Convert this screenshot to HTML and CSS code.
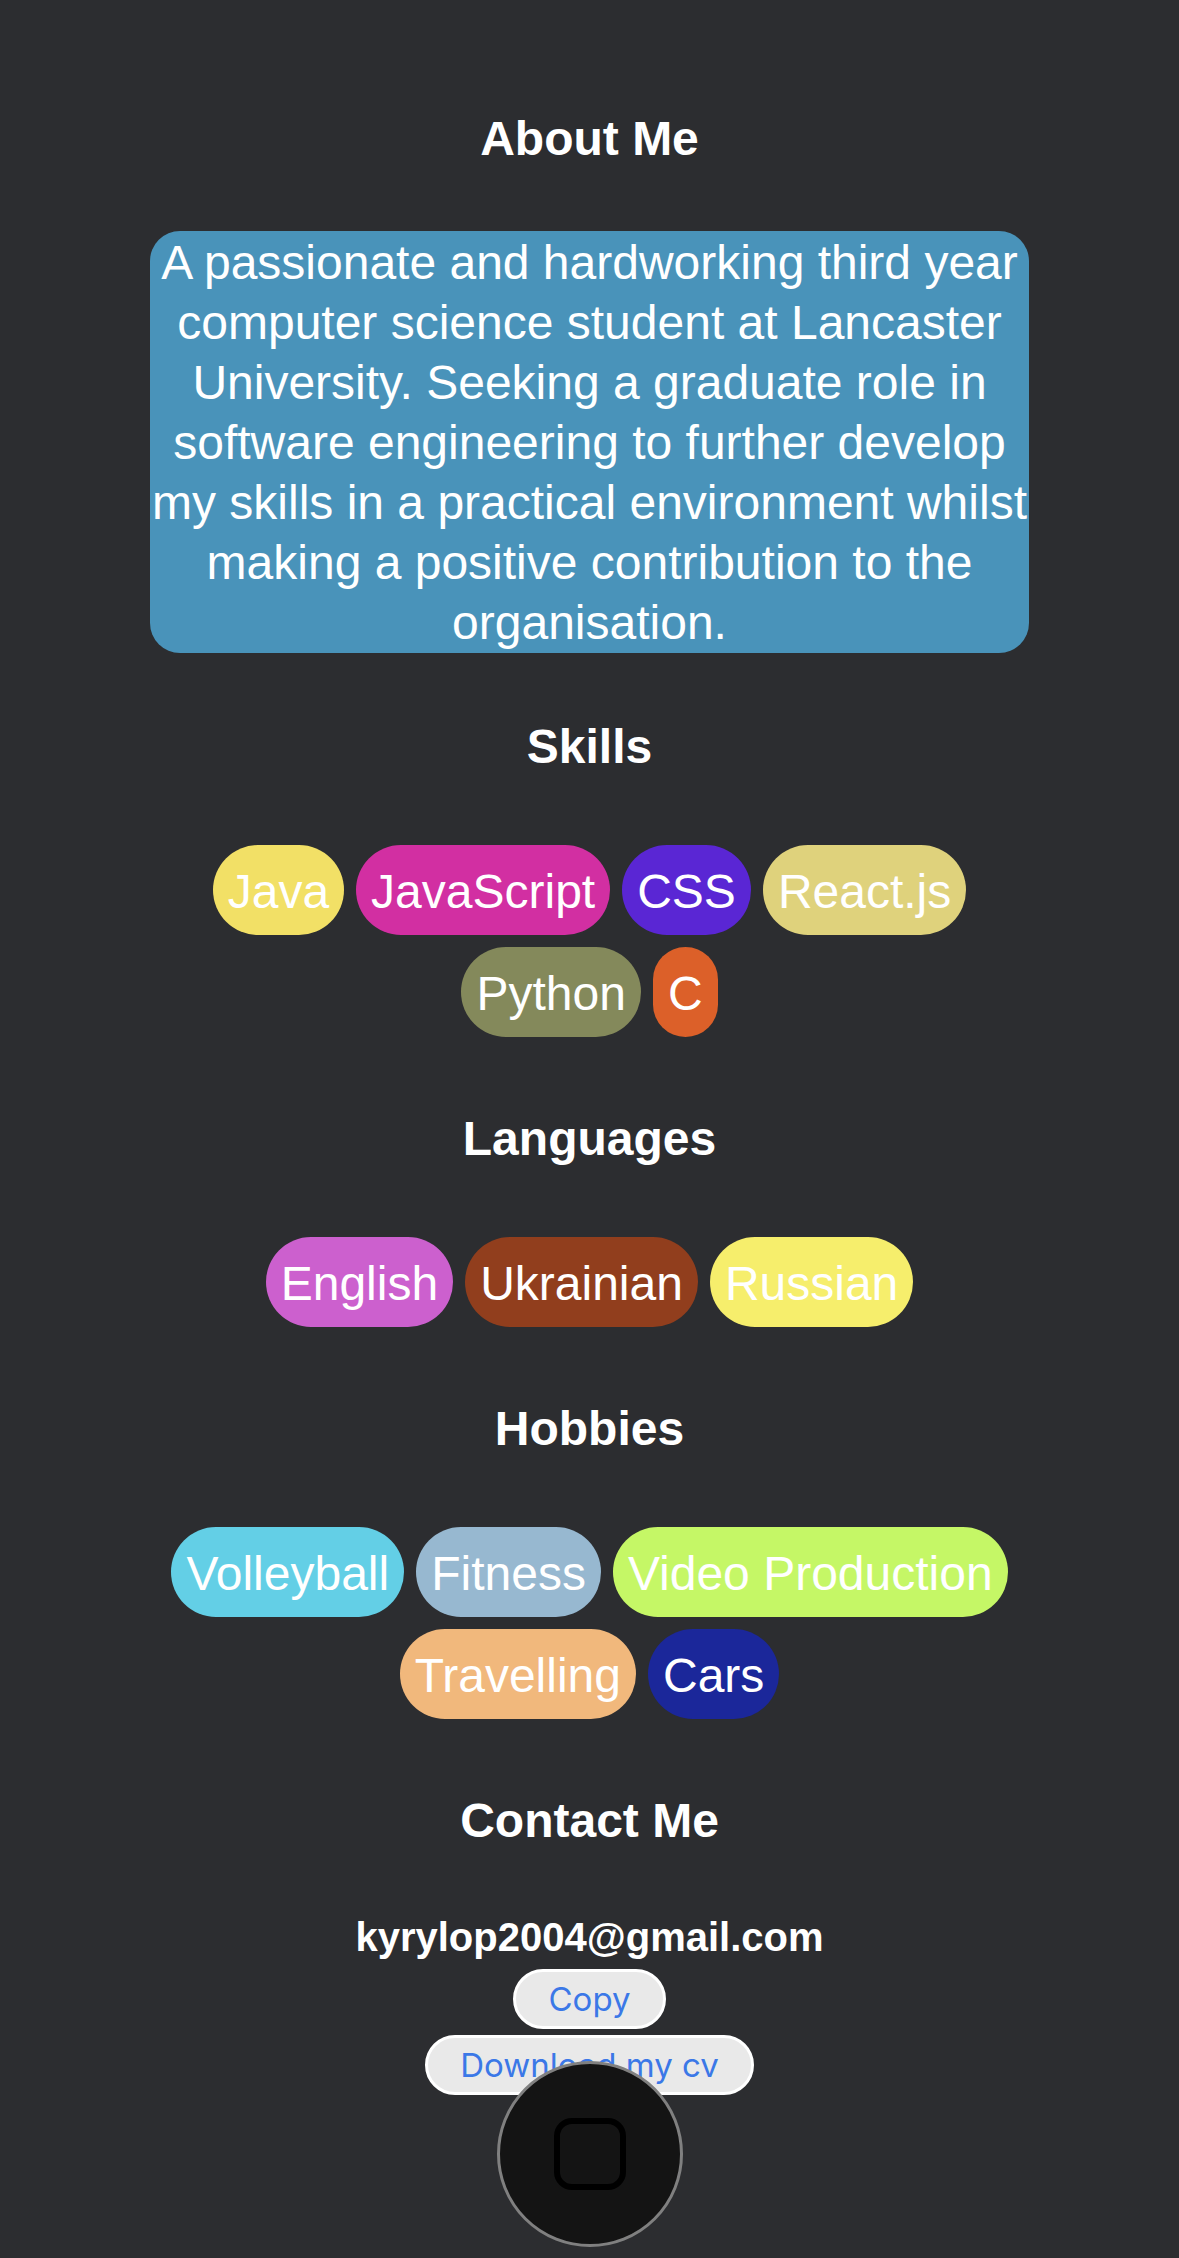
FILE: index.html
```html
<!DOCTYPE html>
<html lang="en">
<head>
  <meta charset="utf-8">
  <meta name="viewport" content="width=device-width, initial-scale=1">
  <title>About Me</title>
  <link rel="stylesheet" href="styles.css">
</head>
<body>
  <main class="page">
    <section class="section">
      <h2 class="heading">About Me</h2>
      <p class="bio">A passionate and hardworking third year computer science student at Lancaster University. Seeking a graduate role in software engineering to further develop my skills in a practical environment whilst making a positive contribution to the organisation.</p>
    </section>
    <section class="section">
      <h2 class="heading">Skills</h2>
      <ul class="chips">
        <li class="chip java">Java</li>
        <li class="chip javascript">JavaScript</li>
        <li class="chip css">CSS</li>
        <li class="chip react">React.js</li>
        <li class="chip python">Python</li>
        <li class="chip c">C</li>
      </ul>
    </section>
    <section class="section">
      <h2 class="heading">Languages</h2>
      <ul class="chips">
        <li class="chip english">English</li>
        <li class="chip ukrainian">Ukrainian</li>
        <li class="chip russian">Russian</li>
      </ul>
    </section>
    <section class="section">
      <h2 class="heading">Hobbies</h2>
      <ul class="chips">
        <li class="chip volleyball">Volleyball</li>
        <li class="chip fitness">Fitness</li>
        <li class="chip video">Video Production</li>
        <li class="chip travelling">Travelling</li>
        <li class="chip cars">Cars</li>
      </ul>
    </section>
    <section class="section">
      <h2 class="heading">Contact Me</h2>
      <div class="contact">
        <h3 class="email">kyrylop2004@gmail.com</h3>
        <button class="action" type="button">Copy</button>
        <button class="action" type="button">Download my cv</button>
      </div>
    </section>
  </main>
  <button class="home" type="button" aria-label="Home"><span class="home-icon"></span></button>
</body>
</html>
```
FILE: styles.css
```css
* {
  box-sizing: border-box;
}

body {
  margin: 0;
  background: #2c2d30;
  color: #fff;
  font-family: "Liberation Sans", Helvetica, Arial, sans-serif;
  font-size: 48px;
  line-height: 60px;
}

.page {
  padding: 43px 150px 150px;
  text-align: center;
}

.heading {
  margin: 0;
  padding: 66px 0 62px;
  font-size: 48px;
  font-weight: 700;
}

.bio {
  margin: 0 0 -2px;
  padding-top: 2px;
  border-radius: 30px;
  background: #4993ba;
}

.chips {
  display: flex;
  flex-wrap: wrap;
  justify-content: center;
  gap: 12px;
  margin: 0;
  padding: 6px 0;
  list-style: none;
}

.chip {
  padding: 17px 15px 13px;
  border-radius: 45px;
}

.java { background: #f2e066; }
.javascript { background: #d22fa2; }
.css { background: #5a26d4; }
.react { background: #dfd27c; }
.python { background: #84895b; }
.c { background: #dc6029; }
.english { background: #cc60ce; }
.ukrainian { background: #913e1d; }
.russian { background: #f6ee6c; }
.volleyball { background: #63cfe6; }
.fitness { background: #97b8d0; }
.video { background: #c5f766; }
.travelling { background: #f1b87c; }
.cars { background: #1b279a; }

.contact {
  display: flex;
  flex-direction: column;
  align-items: center;
  gap: 6px;
}

.email {
  margin: 0;
  padding-bottom: 2px;
  font-size: 40px;
  line-height: 48px;
}

.action {
  height: 60px;
  padding: 0 32px;
  border: 3px solid #fff;
  border-radius: 30px;
  background: #e9e9e9;
  color: #3b78e7;
  font-family: Inter, sans-serif;
  font-size: 33px;
  line-height: 54px;
}

.home {
  position: fixed;
  bottom: 11px;
  left: 50%;
  display: flex;
  align-items: center;
  justify-content: center;
  width: 186px;
  height: 186px;
  margin-left: -93px;
  padding: 0;
  border: 3px solid #808080;
  border-radius: 50%;
  background: #141414;
}

.home-icon {
  width: 72px;
  height: 72px;
  border: 6px solid #000;
  border-radius: 18px;
}
```
